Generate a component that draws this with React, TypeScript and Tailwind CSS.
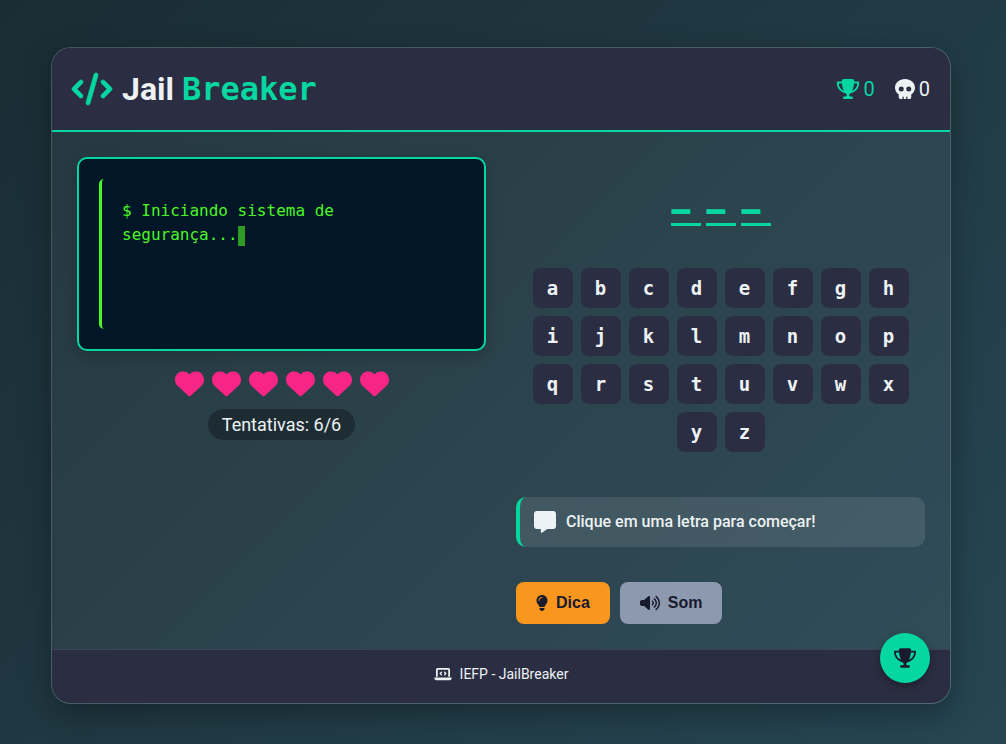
import { useState } from "react";
import {
  FaCode,
  FaHeart,
  FaLaptopCode,
  FaLightbulb,
  FaMessage,
  FaSkull,
  FaTrophy,
  FaVolumeHigh,
} from "react-icons/fa6";

const LETTERS = "abcdefghijklmnopqrstuvwxyz".split("");
const WORD_LENGTH = 3;
const MAX_TRIES = 6;

function Header() {
  return (
    <header className="flex items-center justify-between border-b-2 border-[#06d6a0] bg-[#2b2d42] p-5">
      <h1 className="flex items-center gap-2.5 text-[32px] leading-[42px] font-bold">
        <FaCode
          className="h-8 w-10 overflow-visible stroke-current stroke-[12px] text-[#06d6a0]"
          aria-hidden="true"
        />
        <span>
          Jail{" "}
          <span className="font-['DejaVu_Sans_Mono',monospace] text-[#06d6a0]">Breaker</span>
        </span>
      </h1>
      <div className="flex items-center gap-5 text-xl">
        <span className="flex items-center gap-1 text-[#06d6a0]">
          <FaTrophy className="h-5 w-6" aria-label="Vitórias" />
          <span>0</span>
        </span>
        <span className="flex items-center gap-1">
          <FaSkull className="h-5 w-5" aria-label="Derrotas" />
          <span>0</span>
        </span>
      </div>
    </header>
  );
}

function Terminal() {
  return (
    <div className="rounded-[10px] border-2 border-[#06d6a0] bg-[#011627] p-5 shadow-[0_5px_15px_rgba(0,0,0,0.2)]">
      <div className="min-h-[150px] rounded-[5px] border-l-3 border-[#4af626] p-5 font-['DejaVu_Sans_Mono',monospace] text-base leading-6 text-[#4af626]">
        $ Iniciando sistema de segurança...
        <span className="inline-block h-5 w-[7px] bg-[#4af626] align-middle opacity-60" />
      </div>
    </div>
  );
}

function Lives() {
  return (
    <div className="mt-[18px] flex flex-col items-center gap-[11px]">
      <div className="flex gap-2">
        {Array.from({ length: MAX_TRIES }, (_, i) => (
          <FaHeart key={i} className="size-[29px] text-[#f72585]" aria-hidden="true" />
        ))}
      </div>
      <p className="rounded-full bg-black/30 px-3.5 py-1 text-lg leading-[23px]">
        Tentativas: 6/6
      </p>
    </div>
  );
}

function Word() {
  return (
    <div className="flex justify-center gap-[5px] pt-[26px] pb-[42px] font-['DejaVu_Sans_Mono',monospace] text-[28px] leading-7 font-bold text-[#06d6a0]">
      {Array.from({ length: WORD_LENGTH }, (_, i) => (
        <span
          key={i}
          className="w-[30px] border-b-3 border-[#06d6a0] pb-3 pl-0.5 [-webkit-text-stroke:2px_#06d6a0]"
        >
          _
        </span>
      ))}
    </div>
  );
}

export default function App() {
  const [used, setUsed] = useState<string[]>([]);

  return (
    <div className="min-h-screen bg-linear-135 from-[#1a2c34] to-[#264653] pt-[47px] pr-1 pb-10 font-[Roboto,sans-serif] text-[#edf2f4]">
      <div className="relative mx-auto w-full max-w-[900px] overflow-hidden rounded-[20px] border border-white/15 bg-white/5 shadow-[0_10px_30px_rgba(0,0,0,0.3)]">
        <Header />
        <main className="grid grid-cols-2 gap-[30px] p-[25px]">
          <section>
            <Terminal />
            <Lives />
          </section>
          <section>
            <Word />
            <div className="flex flex-wrap justify-center gap-2">
              {LETTERS.map((letter) => (
                <button
                  key={letter}
                  type="button"
                  disabled={used.includes(letter)}
                  onClick={() => setUsed([...used, letter])}
                  className="size-10 rounded-lg bg-[#2b2d42] font-['DejaVu_Sans_Mono',monospace] text-[19px] font-bold disabled:opacity-50"
                >
                  {letter}
                </button>
              ))}
            </div>
            <p className="mt-[45px] flex h-[50px] items-center gap-2.5 rounded-[10px] border-l-4 border-[#06d6a0] bg-white/10 px-3.5 font-medium">
              <FaMessage className="size-[22px]" aria-hidden="true" />
              Clique em uma letra para começar!
            </p>
            <div className="mt-[35px] flex gap-2.5 font-['Liberation_Sans',sans-serif] font-bold text-[#1a1a2e]">
              <button
                type="button"
                className="flex h-[42px] items-center gap-2 rounded-lg bg-[#f8961e] px-5"
              >
                <FaLightbulb className="h-4 w-3" aria-hidden="true" />
                Dica
              </button>
              <button
                type="button"
                className="flex h-[42px] items-center gap-2 rounded-lg bg-[#8d99ae] px-5"
              >
                <FaVolumeHigh className="h-4 w-5" aria-hidden="true" />
                Som
              </button>
            </div>
          </section>
        </main>
        <footer className="flex h-[54px] items-center justify-center gap-2 border-t border-white/10 bg-[#2b2d42] pb-1.5 text-sm">
          <FaLaptopCode className="h-3.5 w-[18px]" aria-hidden="true" />
          IEFP - JailBreaker
        </footer>
        <button
          type="button"
          aria-label="Conquistas"
          className="absolute right-5 bottom-5 flex size-[50px] items-center justify-center rounded-full bg-[#06d6a0] text-[#1a1a2e] shadow-[0_4px_10px_rgba(0,0,0,0.3)]"
        >
          <FaTrophy className="h-5 w-[22px]" aria-hidden="true" />
        </button>
      </div>
    </div>
  );
}
